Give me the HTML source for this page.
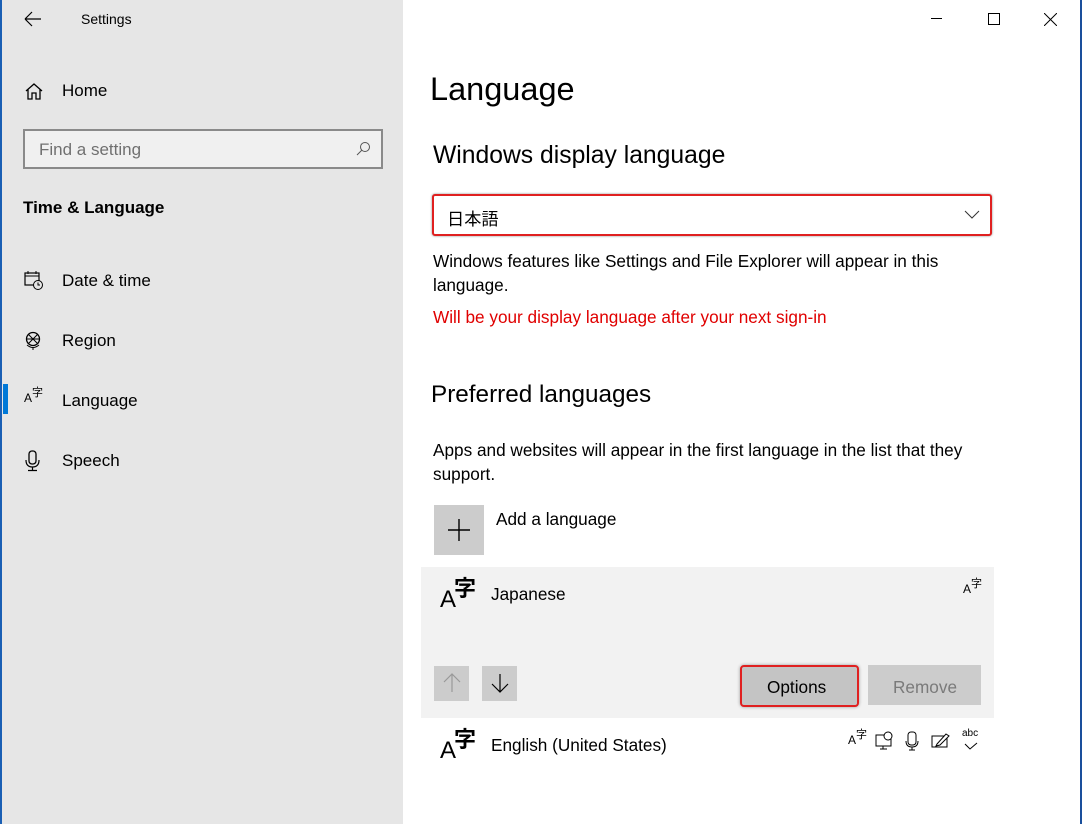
<!DOCTYPE html>
<html><head><meta charset="utf-8"><style>
*{margin:0;padding:0;box-sizing:border-box}
body{width:1082px;height:824px;overflow:hidden;background:#fff;font-family:"Segoe UI","Liberation Sans","Noto Sans CJK JP",sans-serif;color:#000;position:relative}
.a{position:absolute;white-space:nowrap}
#side{position:absolute;left:0;top:0;width:403px;height:824px;background:#e6e6e6}
.lb{position:absolute;left:0;top:0;width:2px;height:824px;background:#1a5fb4}
.rb{position:absolute;right:0;top:0;width:2px;height:824px;background:#1a4f9c}
.nav{font-size:17px;color:#000}
.t{font-size:17.2px}
</style></head><body>
<div id="side">
<div class="lb"></div>
<svg class="a" style="left:24px;top:11px" width="18" height="16"><path d="M1 8H17M1 8L8 1M1 8L8 15" stroke="#000" stroke-width="1.2" fill="none"/></svg>
<div class="a" style="left:81px;top:11px;font-size:14px">Settings</div>
<svg class="a" style="left:24px;top:82px" width="20" height="18"><path d="M2 9L10 2L18 9M4 7.5V17H8V11H12V17H16V7.5" stroke="#000" stroke-width="1.3" fill="none"/></svg>
<div class="a nav" style="left:62px;top:81px">Home</div>
<div class="a" style="left:23px;top:129px;width:360px;height:40px;border:2px solid #8a8a8a;background:#f0f0f0"></div>
<div class="a" style="left:39px;top:140px;font-size:17px;color:#707070">Find a setting</div>
<svg class="a" style="left:355px;top:141px" width="16" height="16"><circle cx="10" cy="6" r="4.5" stroke="#555" fill="none"/><path d="M7 9L2 14" stroke="#555"/></svg>
<div class="a" style="left:23px;top:198px;font-size:17px;font-weight:bold">Time &amp; Language</div>
<svg class="a" style="left:24px;top:270px" width="20" height="20"><rect x="1" y="3" width="14" height="12" stroke="#000" fill="none" stroke-width="1.2"/><path d="M1 6H15M4 1V4M12 1V4" stroke="#000"/><circle cx="14" cy="15" r="4.5" fill="#e6e6e6" stroke="#000"/><path d="M14 12.5V15H16" stroke="#000" fill="none"/></svg>
<div class="a nav" style="left:62px;top:271px">Date &amp; time</div>
<svg class="a" style="left:24px;top:331px" width="20" height="20"><circle cx="9" cy="8" r="6.5" stroke="#000" fill="none" stroke-width="1.3"/><path d="M4 3L14 13M14 3L4 13M2.5 8H15.5" stroke="#000"/><path d="M3 14Q9 19 15 14M9 17V19" stroke="#000" fill="none"/></svg>
<div class="a nav" style="left:62px;top:331px">Region</div>
<div class="a" style="left:3px;top:384px;width:5px;height:30px;background:#0078d7"></div>
<div class="a" style="left:24px;top:390px;font-size:12px">A<span style="font-size:11px;position:relative;top:-6px">字</span></div>
<div class="a nav" style="left:62px;top:391px">Language</div>
<svg class="a" style="left:24px;top:450px" width="18" height="22"><rect x="5" y="1" width="7" height="13" rx="3" stroke="#000" fill="none" stroke-width="1.3"/><path d="M2 10Q2 17 8.5 17Q15 17 15 10M8.5 17V20M4 20.5H13" stroke="#000" fill="none" stroke-width="1.2"/></svg>
<div class="a nav" style="left:62px;top:451px">Speech</div>
</div>
<div class="rb"></div>
<div class="a" style="left:931px;top:18px;width:11px;height:1px;background:#000"></div>
<div class="a" style="left:988px;top:13px;width:12px;height:12px;border:1px solid #000"></div>
<svg class="a" style="left:1044px;top:13px" width="13" height="13"><path d="M0 0L13 13M13 0L0 13" stroke="#000"/></svg>
<div class="a" style="left:430px;top:71px;font-size:32.5px;font-weight:300">Language</div>
<div class="a" style="left:433px;top:142px;font-size:24.7px;font-weight:300">Windows display language</div>
<div class="a" style="left:432px;top:194px;width:560px;height:42px;border:2px solid #e02020;border-radius:3px;box-shadow:0 0 2px #888;background:#fff"></div>
<div class="a t" style="left:447px;top:205px">日本語</div>
<svg class="a" style="left:964px;top:210px" width="16" height="10"><path d="M1 1L8 8L15 1" stroke="#333" fill="none"/></svg>
<div class="a t" style="left:433px;top:249px;line-height:24px;white-space:normal;width:580px">Windows features like Settings and File Explorer will appear in this<br>language.</div>
<div class="a t" style="left:433px;top:307px;color:#e00000">Will be your display language after your next sign-in</div>
<div class="a" style="left:431px;top:381px;font-size:24.3px;font-weight:300">Preferred languages</div>
<div class="a t" style="left:433px;top:438px;line-height:24px;white-space:normal;width:580px">Apps and websites will appear in the first language in the list that they<br>support.</div>
<div class="a" style="left:434px;top:505px;width:50px;height:50px;background:#ccc"></div>
<svg class="a" style="left:448px;top:519px" width="22" height="22"><path d="M11 0V22M0 11H22" stroke="#000" stroke-width="1.4"/></svg>
<div class="a t" style="left:496px;top:509px">Add a language</div>
<div class="a" style="left:421px;top:567px;width:573px;height:151px;background:#f2f2f2"></div>
<div class="a" style="left:440px;top:588px;font-size:24px;line-height:24px">A<span style="font-size:22px;font-weight:bold;position:relative;top:-11px;left:-2px">字</span></div>
<div class="a t" style="left:491px;top:584px">Japanese</div>
<div class="a" style="left:963px;top:581px;font-size:12px">A<span style="font-size:11px;position:relative;top:-6px">字</span></div>
<div class="a" style="left:434px;top:666px;width:35px;height:35px;background:#ccc"></div>
<svg class="a" style="left:443px;top:673px" width="18" height="20"><path d="M9 1V19M1 9L9 1L17 9" stroke="#999" fill="none" stroke-width="1.2"/></svg>
<div class="a" style="left:482px;top:666px;width:35px;height:35px;background:#ccc"></div>
<svg class="a" style="left:491px;top:673px" width="18" height="20"><path d="M9 1V19M1 11L9 19L17 11" stroke="#000" fill="none" stroke-width="1.2"/></svg>
<div class="a" style="left:740px;top:665px;width:119px;height:42px;background:#c4c4c4;border:2px solid #e02020;border-radius:4px;box-shadow:0 0 3px #999"></div>
<div class="a t" style="left:767px;top:677px">Options</div>
<div class="a" style="left:868px;top:665px;width:113px;height:40px;background:#ccc"></div>
<div class="a t" style="left:893px;top:677px;color:#7a7a7a">Remove</div>
<div class="a" style="left:440px;top:739px;font-size:24px;line-height:24px">A<span style="font-size:22px;font-weight:bold;position:relative;top:-11px;left:-2px">字</span></div>
<div class="a t" style="left:491px;top:735px">English (United States)</div>
<div class="a" style="left:848px;top:732px;font-size:12px">A<span style="font-size:11px;position:relative;top:-6px">字</span></div>
<svg class="a" style="left:875px;top:731px" width="20" height="20"><rect x="1" y="4" width="15" height="11" stroke="#000" fill="none"/><circle cx="13" cy="5" r="4" fill="#fff" stroke="#000"/><path d="M8 15V18M5 18H12" stroke="#000"/></svg>
<svg class="a" style="left:904px;top:731px" width="16" height="20"><rect x="4" y="1" width="8" height="13" rx="3" stroke="#000" fill="none"/><path d="M2 10Q2 16 8 16Q14 16 14 10M8 16V19M5 19H11" stroke="#000" fill="none"/></svg>
<svg class="a" style="left:931px;top:731px" width="20" height="18"><rect x="1" y="5" width="15" height="11" stroke="#000" fill="none"/><path d="M6 13L15 3L18 5L9 14L5 15Z" stroke="#000" fill="#fff"/></svg>
<div class="a" style="left:962px;top:728px;font-size:10px">abc</div>
<svg class="a" style="left:964px;top:742px" width="14" height="8"><path d="M1 2L6 7L13 1" stroke="#000" fill="none"/></svg>
</body></html>
